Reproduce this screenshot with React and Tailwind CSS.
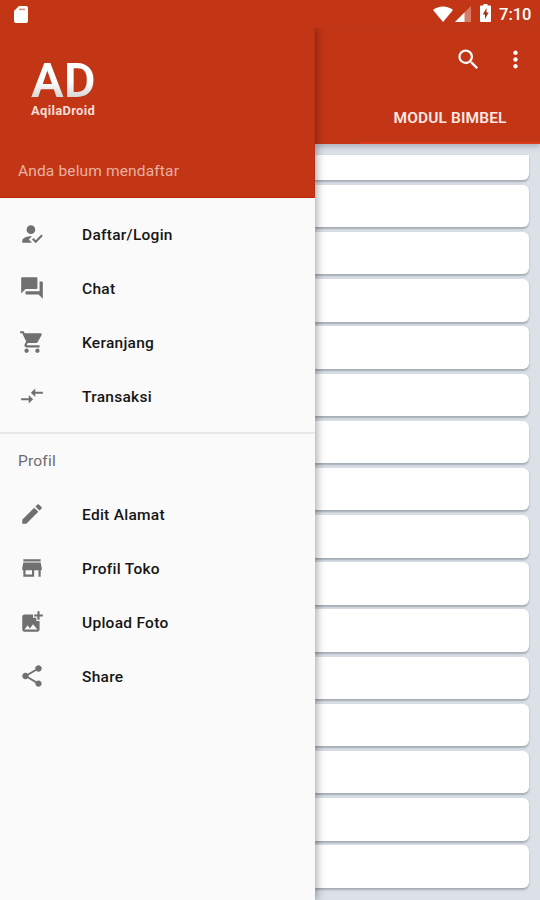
import React from 'react'
import { MdHowToReg, MdQuestionAnswer, MdShoppingCart, MdCompareArrows, MdEdit, MdStore, MdAddPhotoAlternate, MdShare, MdSearch, MdMoreVert } from 'react-icons/md'

const mainMenu = [
  { label: 'Daftar/Login', icon: MdHowToReg },
  { label: 'Chat', icon: MdQuestionAnswer },
  { label: 'Keranjang', icon: MdShoppingCart },
  { label: 'Transaksi', icon: MdCompareArrows },
]

const profileMenu = [
  { label: 'Edit Alamat', icon: MdEdit },
  { label: 'Profil Toko', icon: MdStore },
  { label: 'Upload Foto', icon: MdAddPhotoAlternate },
  { label: 'Share', icon: MdShare },
]

const StatusBar = () => (
  <div className="h-7 shrink-0 flex items-center bg-[#c23616] text-white pl-3.5 pr-2">
    <svg className="w-[14px] h-[17px]" viewBox="0 0 14 17">
      <path fill="currentColor" d="M5 0h7a2 2 0 0 1 2 2v13a2 2 0 0 1-2 2H2a2 2 0 0 1-2-2V5z" />
      <path stroke="#d98a78" strokeWidth="1.5" d="M5 3.4h6" />
    </svg>
    <svg className="w-5 h-4 ml-auto" viewBox="0 0 20 16">
      <path fill="currentColor" d="M10 16L0 4C5.500-.8 14.500-.8 20 4z" />
    </svg>
    <svg className="w-4 h-4 ml-[2px]" viewBox="0 0 16 16">
      <path fill="#fff" fillOpacity=".35" d="M0 16L16 0v16z" />
      <path fill="currentColor" d="M0 16L9.500 6.500V16z" />
    </svg>
    <svg className="w-[11px] h-[18px] ml-[9px] -mt-[2px]" viewBox="0 0 11 18">
      <path fill="currentColor" d="M3.500 0h4v1.500H10a1 1 0 0 1 1 1V17a1 1 0 0 1-1 1H1a1 1 0 0 1-1-1V2.500a1 1 0 0 1 1-1h2.500z" />
      <path fill="#a62d14" d="M6.500 4L2.800 10.500h2.200V15l3.600-6.500H6.500z" />
    </svg>
    <span className="ml-[8px] mt-[2px] w-[33px] text-[16.5px] leading-none font-medium whitespace-nowrap">7:10</span>
  </div>
)

const MenuItem = ({ label, icon: Icon }) => (
  <button className="w-full h-[54px] flex items-center pl-[19px] text-left">
    <Icon className="w-[26px] h-[26px] text-[#707070]" />
    <span className="ml-[37px] pt-[3px] text-[15.5px] font-medium tracking-[0.27px] text-[#161616]">{label}</span>
  </button>
)

const Drawer = () => (
  <aside className="relative z-10 w-[315px] shrink-0 flex flex-col bg-[#fafafa] shadow-[1px_0_9px_rgba(0,0,0,0.4)] [clip-path:inset(0_-20px_0_0)]">
    <div className="h-[170px] shrink-0 flex flex-col bg-[#c23616] border-b border-r border-b-[#bd2208] border-r-[#bd2f12] pl-[18px] pt-[35px]">
      <div className="ml-[13px] flex flex-col text-white">
        <span className="w-fit h-[41px] text-[49px] leading-[36px] font-semibold bg-linear-to-b from-white from-45% to-[#cfcfcf] to-90% bg-clip-text text-transparent">AD</span>
        <span className="text-[13px] leading-[14px] font-bold tracking-[0.3px] text-[#f6dcd6]">AqilaDroid</span>
      </div>
      <p className="mt-auto mb-[14px] text-[15.5px] leading-6 tracking-[0.15px] text-[#eab0a3]">Anda belum mendaftar</p>
    </div>
    <nav className="pt-[9px]">
      {mainMenu.map((item) => <MenuItem key={item.label} {...item} />)}
      <div className="mt-[9px] border-t-2 border-[#e8e8e8]" />
      <h2 className="h-[53px] flex items-center pt-[3px] pl-[18px] text-[15.5px] tracking-[0.2px] text-[#6c6c6c]">Profil</h2>
      {profileMenu.map((item) => <MenuItem key={item.label} {...item} />)}
    </nav>
  </aside>
)

const App = () => (
  <div className="w-[540px] h-[900px] flex flex-col overflow-hidden bg-[#dce1e8] font-[Roboto,sans-serif]">
    <StatusBar />
    <div className="flex-1 min-h-0 flex">
      <Drawer />
      <main className="flex-1 min-w-0 flex flex-col">
        <header className="h-[116px] shrink-0 flex flex-col bg-[#c23616] text-white shadow-[0_3px_5px_rgba(0,0,0,0.2)]">
          <div className="h-[62px] flex items-center justify-end gap-[20px] pr-[11px]">
            <MdSearch className="w-[27px] h-[27px]" />
            <MdMoreVert className="w-[27px] h-[27px]" />
          </div>
          <div className="flex-1 flex ml-[45px] pt-[6px] border-b-2 border-[#dc3b1c] items-center justify-center">
            <span className="text-[15.5px] font-semibold tracking-[0.12px] text-[#fbe8e4]">MODUL BIMBEL</span>
          </div>
        </header>
        <div className="pt-[11px] pr-[11px] flex flex-col gap-[4.8px]">
          <div className="h-[25px] bg-white rounded-br-md shadow-[0_1.5px_2px_rgba(80,90,95,0.4)]" />
          {Array.from({ length: 15 }, (_, i) => (
            <div key={i} className="h-[42.4px] bg-white rounded-r-md shadow-[0_1.5px_2px_rgba(80,90,95,0.4)]" />
          ))}
        </div>
      </main>
    </div>
  </div>
)

export default App
